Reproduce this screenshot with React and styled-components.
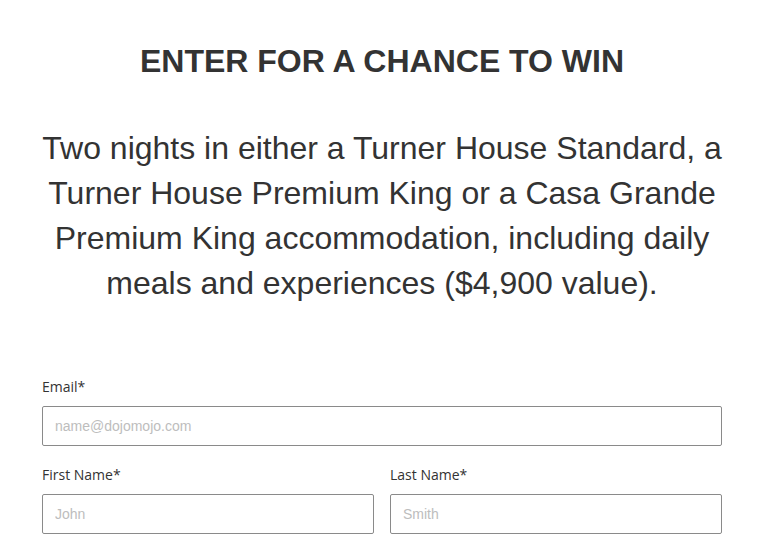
import React from 'react';
import styled, { createGlobalStyle } from 'styled-components';

const GlobalStyle = createGlobalStyle`
  body {
    margin: 0;
    background: #fff;
    font-family: "Liberation Sans", Arial, sans-serif;
  }
`;

const Page = styled.main`
  width: 680px;
  margin-left: 42px;
  padding-top: 43px;
`;

const Title = styled.h1`
  margin: 0;
  font-size: 32px;
  line-height: 37px;
  font-weight: 700;
  color: #333;
  text-align: center;
`;

const Prize = styled.p`
  margin: 46px -4px 0;
  font-size: 32px;
  line-height: 45px;
  color: #333;
  text-align: center;
`;

const Form = styled.form`
  margin-top: 71px;
  display: flex;
  flex-direction: column;
  gap: 19px;
`;

const Row = styled.div`
  display: grid;
  grid-template-columns: ${({ cols }) => `repeat(${cols || 1}, 1fr)`};
  gap: 16px;
`;

const Field = styled.label`
  display: flex;
  flex-direction: column;
  gap: 9px;
`;

const Label = styled.span`
  font-family: "Open Sans", sans-serif;
  font-size: 14px;
  line-height: 20px;
  color: #333;
`;

const Input = styled.input`
  box-sizing: border-box;
  width: 100%;
  height: 40px;
  padding: 0 12px;
  border: 1px solid #8a8a8a;
  border-radius: 2px;
  font-family: "Liberation Sans", Arial, sans-serif;
  font-size: 14px;
  color: #333;
  background: #fff;
  outline: none;

  &::placeholder {
    color: #bdbdbd;
  }
`;

const App = () => (
  <>
    <GlobalStyle />
    <Page>
      <Title>ENTER FOR A CHANCE TO WIN</Title>
      <Prize>
        Two nights in either a Turner House Standard, a Turner House Premium King or a Casa
        Grande Premium King accommodation, including daily meals and experiences ($4,900
        value).
      </Prize>
      <Form onSubmit={(e) => e.preventDefault()}>
        <Row>
          <Field>
            <Label>Email*</Label>
            <Input type="email" placeholder="name@dojomojo.com" />
          </Field>
        </Row>
        <Row cols={2}>
          <Field>
            <Label>First Name*</Label>
            <Input type="text" placeholder="John" />
          </Field>
          <Field>
            <Label>Last Name*</Label>
            <Input type="text" placeholder="Smith" />
          </Field>
        </Row>
      </Form>
    </Page>
  </>
);

export default App;
